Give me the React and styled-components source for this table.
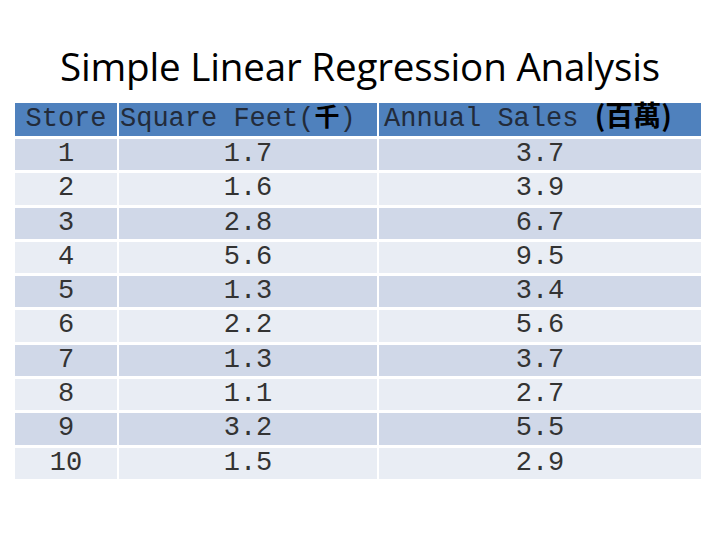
import React from "react";
import styled, { createGlobalStyle } from "styled-components";

const Global = createGlobalStyle`
  html, body { margin: 0; padding: 0; background: #ffffff; }
  body { width: 720px; height: 540px; overflow: hidden; }
`;

const Page = styled.div`
  width: 720px;
  height: 540px;
  display: flex;
  flex-direction: column;
  align-items: center;
`;

const Title = styled.h1`
  margin: 38px 0 0 0;
  height: 65px;
  font-family: "Open Sans", "Liberation Sans", sans-serif;
  font-weight: 400;
  font-size: 38.6px;
  line-height: 56px;
  color: #000;
  letter-spacing: -0.2px;
  white-space: nowrap;
`;

const Grid = styled.div`
  align-self: flex-start;
  margin-left: 15px;
  display: grid;
  grid-template-columns: 102px 258px 322px;
  grid-template-rows: 33px;
  grid-auto-rows: 31.3px;
  column-gap: 2px;
  row-gap: 3px;
  background: #ffffff;
`;

const Cell = styled.div`
  display: block;
  text-align: ${(p) => p.$align || "center"};
  padding-left: ${(p) => p.$pad || 0}px;
  background: ${(p) => (p.$head ? "#4f81bd" : p.$odd ? "#d0d8e8" : "#e9edf4")};
  font-family: "Liberation Mono", "Courier New", monospace;
  font-size: 27px;
  line-height: ${(p) => (p.$head ? "33px" : "31.3px")};
  color: ${(p) => (p.$head ? "#222b3a" : "#333333")};
  white-space: pre;
`;

const Cjk = styled.span`
  font-family: "Noto Sans CJK TC", "Noto Sans CJK SC", sans-serif;
  font-weight: 700;
  color: #000;
  line-height: 0;
  font-size: ${(p) => p.$size || 25}px;
`;

const rows = [
  [1, "1.7", "3.7"],
  [2, "1.6", "3.9"],
  [3, "2.8", "6.7"],
  [4, "5.6", "9.5"],
  [5, "1.3", "3.4"],
  [6, "2.2", "5.6"],
  [7, "1.3", "3.7"],
  [8, "1.1", "2.7"],
  [9, "3.2", "5.5"],
  [10, "1.5", "2.9"],
];

export default function App() {
  return (
    <Page>
      <Global />
      <Title>Simple Linear Regression Analysis</Title>
      <Grid>
        <Cell $head>Store</Cell>
        <Cell $head $align="left" $pad={1}>
          Square Feet(<Cjk>千</Cjk>)
        </Cell>
        <Cell $head $align="left" $pad={5}>
          {"Annual Sales "}
          <Cjk $size={28}>(百萬)</Cjk>
        </Cell>
        {rows.map((r, i) => (
          <React.Fragment key={r[0]}>
            <Cell $odd={i % 2 === 0}>{r[0]}</Cell>
            <Cell $odd={i % 2 === 0}>{r[1]}</Cell>
            <Cell $odd={i % 2 === 0}>{r[2]}</Cell>
          </React.Fragment>
        ))}
      </Grid>
    </Page>
  );
}
